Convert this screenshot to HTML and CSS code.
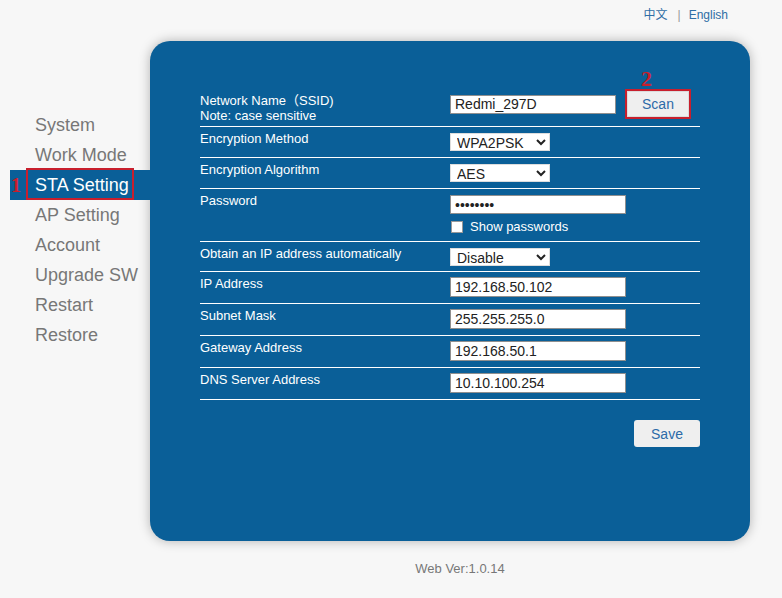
FILE: index.html
```html
<!DOCTYPE html>
<html lang="en">
<head>
    <meta charset="UTF-8">
    <meta name="viewport" content="width=device-width, initial-scale=1.0">
    <title>STA Setting</title>
    <link rel="stylesheet" href="styles.css">
</head>
<body>
    <div class="top">
        <a href="#">中文</a><span class="sep">|</span><a href="#">English</a>
    </div>
    <div class="main">
        <ul class="menu">
            <li>System</li>
            <li>Work Mode</li>
            <li class="active"><span class="num">1</span><span class="box"></span>STA Setting</li>
            <li>AP Setting</li>
            <li>Account</li>
            <li>Upgrade SW</li>
            <li>Restart</li>
            <li>Restore</li>
        </ul>
        <div class="column">
            <div class="panel">
                <form class="form">
                    <div class="row row-ssid">
                        <div class="label">Network Name（SSID)<br>Note: case sensitive</div>
                        <div class="field field-ssid">
                            <input type="text" class="text ssid" value="Redmi_297D">
                            <span class="mark"><span class="num2">2</span><button type="button" class="btn scan">Scan</button></span>
                        </div>
                    </div>
                    <div class="row row-31">
                        <div class="label">Encryption Method</div>
                        <div class="field">
                            <select><option>WPA2PSK</option></select>
                        </div>
                    </div>
                    <div class="row row-31">
                        <div class="label">Encryption Algorithm</div>
                        <div class="field">
                            <select><option>AES</option></select>
                        </div>
                    </div>
                    <div class="row row-pass">
                        <div class="label">Password</div>
                        <div class="field">
                            <input type="password" class="text pass" value="12345678">
                            <label class="check"><input type="checkbox"> Show passwords</label>
                        </div>
                    </div>
                    <div class="row row-30">
                        <div class="label">Obtain an IP address automatically</div>
                        <div class="field">
                            <select><option>Disable</option></select>
                        </div>
                    </div>
                    <div class="row">
                        <div class="label">IP Address</div>
                        <div class="field"><input type="text" class="text" value="192.168.50.102"></div>
                    </div>
                    <div class="row">
                        <div class="label">Subnet Mask</div>
                        <div class="field"><input type="text" class="text" value="255.255.255.0"></div>
                    </div>
                    <div class="row">
                        <div class="label">Gateway Address</div>
                        <div class="field"><input type="text" class="text" value="192.168.50.1"></div>
                    </div>
                    <div class="row">
                        <div class="label">DNS Server Address</div>
                        <div class="field"><input type="text" class="text" value="10.10.100.254"></div>
                    </div>
                    <div class="actions">
                        <button type="button" class="btn save">Save</button>
                    </div>
                </form>
            </div>
            <div class="footer">Web Ver:1.0.14</div>
        </div>
    </div>
</body>
</html>
```

FILE: styles.css
```css
/* Reset */
body, ul, form {
    margin: 0;
    padding: 0;
}

body {
    font-family: "Liberation Sans", Arial, "Noto Sans CJK SC", sans-serif;
    background-color: #f7f7f7;
    color: #777;
}

/* Language links */
.top {
    height: 41px;
    box-sizing: border-box;
    padding: 7px 54px 0 0;
    text-align: right;
    font-size: 12px;
    line-height: 16px;
}

.top a {
    color: #2f6ea5;
    text-decoration: none;
}

.top .sep {
    color: #999;
    margin: 0 8px 0 10px;
}

.main {
    display: flex;
}

/* Left menu */
.menu {
    width: 150px;
    padding-top: 69px;
    list-style: none;
}

.menu li {
    position: relative;
    margin-left: 10px;
    padding-left: 25px;
    font-size: 18px;
    line-height: 30px;
    color: #777;
}

.menu li.active {
    background-color: #0a5f98;
    color: #fff;
}

.menu .num {
    position: absolute;
    left: 1px;
    top: 0;
    font-family: "Liberation Serif", serif;
    font-weight: bold;
    font-size: 20px;
    color: #c81f2d;
}

.menu .box {
    position: absolute;
    left: 16px;
    top: -2px;
    width: 108px;
    height: 32px;
    box-sizing: border-box;
    border: 2px solid #c81f2d;
}

/* Main panel */
.column {
    width: 600px;
}

.panel {
    height: 500px;
    box-sizing: border-box;
    padding: 48px 50px 0;
    background-color: #0a5f98;
    border-radius: 20px;
    box-shadow: 0 0 12px rgba(0, 0, 0, 0.28);
}

.row {
    display: flex;
    height: 32px;
    box-sizing: border-box;
    border-bottom: 1px solid #fff;
}

.row-ssid { height: 38px; }
.row-31 { height: 31px; }
.row-30 { height: 30px; }
.row-pass { height: 53px; }

.label {
    width: 250px;
    padding-top: 4px;
    font-size: 13px;
    line-height: 16px;
    color: #fff;
}

.row-ssid .label {
    line-height: 15px;
}

.field {
    flex: 1;
    padding-top: 5px;
}

.field-ssid {
    display: flex;
    align-items: center;
    padding-top: 0;
    height: 30px;
}

.text {
    display: block;
    width: 176px;
    height: 20px;
    box-sizing: border-box;
    margin: 0;
    padding: 0 4px;
    border: 1px solid #8f8f8f;
    background: #fff;
    font-family: "Liberation Sans", Arial, sans-serif;
    font-size: 14px;
    color: #222;
}

.text.ssid {
    width: 166px;
    height: 19px;
}

.text.pass {
    height: 19px;
    margin-top: 1px;
}

select {
    display: block;
    width: 100px;
    height: 18px;
    margin: 1px 0 0;
    padding: 0 0 0 2px;
    border: 1px solid #ddd;
    background: #fff;
    font-family: "Liberation Sans", Arial, sans-serif;
    font-size: 14px;
    color: #222;
}

.check {
    display: flex;
    align-items: center;
    margin-top: 4px;
    font-size: 13px;
    line-height: 18px;
    color: #fff;
}

.check input {
    appearance: none;
    width: 12px;
    height: 12px;
    margin: 0 7px 0 1px;
    border: 1px solid #999;
    background: #fff;
}

/* Buttons */
.btn {
    background-color: #efefef;
    color: #2c6aa8;
    font-family: "Liberation Sans", Arial, sans-serif;
    font-size: 14px;
    cursor: pointer;
}

.mark {
    position: relative;
    display: inline-block;
    margin-left: 9px;
    border: 2px solid #c81f2d;
}

.mark .num2 {
    position: absolute;
    left: 14px;
    top: -23px;
    font-family: "Liberation Serif", serif;
    font-weight: bold;
    font-size: 22px;
    line-height: 22px;
    color: #c81f2d;
}

.scan {
    display: block;
    width: 62px;
    height: 26px;
    border: 1px solid #dcdcdc;
    padding: 0;
}

.actions {
    display: flex;
    justify-content: flex-end;
    margin-top: 20px;
}

.save {
    width: 66px;
    height: 27px;
    border: none;
    border-radius: 3px;
    padding: 0;
}

/* Footer */
.footer {
    margin-top: 20px;
    padding-left: 20px;
    text-align: center;
    font-size: 13px;
    line-height: 16px;
    color: #777;
}
```
